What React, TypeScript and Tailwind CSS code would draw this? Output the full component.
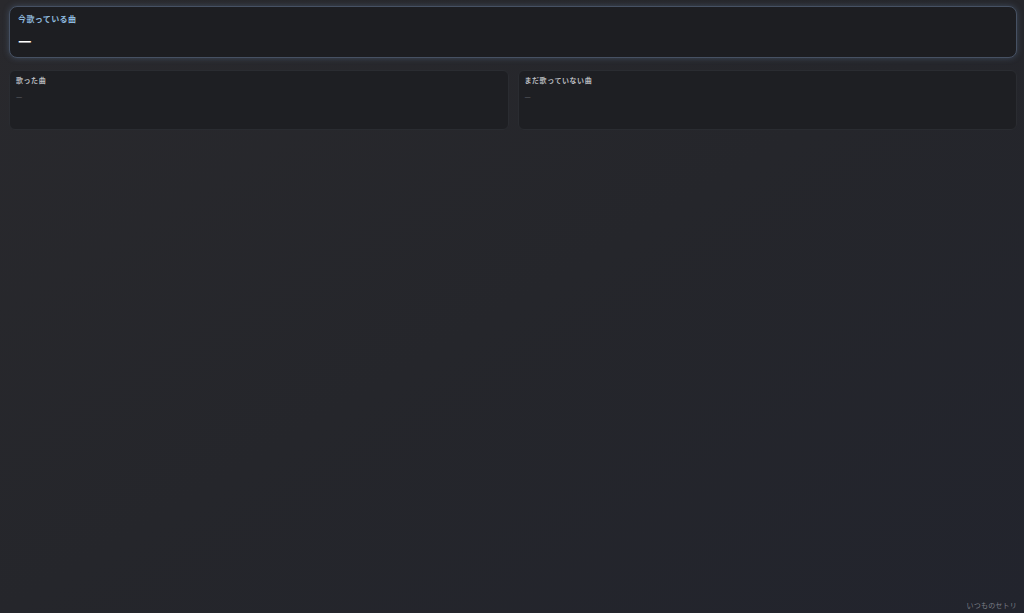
import React from "react";

// Setlist tracker: current song on top, sung / not-yet-sung lists below.

const font = "font-['Noto_Sans_CJK_JP','Noto_Sans',sans-serif]";

function ListCard({ title }: { title: string }) {
  return (
    <section className="h-[60px] rounded-md border border-[#2a2c31] bg-[#1e1f23] px-[6px] pt-[4px]">
      <h2 className="text-[7px] font-bold leading-[11px] tracking-[0.08em] text-[#b8babf]">{title}</h2>
      <p className="mt-[5px] text-[7px] leading-[10px] text-[#6e7178]">—</p>
    </section>
  );
}

export default function App() {
  return (
    <div
      className={`${font} relative flex h-[613px] w-[1024px] flex-col overflow-hidden bg-gradient-to-br from-[#29292d] via-[#25262b] to-[#22242d] pl-[9px] pr-[7px] pt-[6px]`}
    >
      {/* now playing */}
      <section className="h-[52px] rounded-lg border border-[#465163] bg-[#1d1e22] px-[8px] pt-[6px] shadow-[0_0_6px_rgba(110,140,180,0.35)]">
        <h1 className="text-[8px] font-bold leading-[12px] tracking-[0.05em] text-[#8fbadf]">今歌っている曲</h1>
        <p className="mt-[7px] text-[15px] font-bold leading-[16px] text-white">—</p>
      </section>

      <div className="mt-[12px] grid grid-cols-2 gap-[9px]">
        <ListCard title="歌った曲" />
        <ListCard title="まだ歌っていない曲" />
      </div>

      <footer className="absolute bottom-[3px] right-[7px] text-[7px] leading-[10px] tracking-[0.03em] text-[#7b7e86]">
        いつものセトリ
      </footer>
    </div>
  );
}
